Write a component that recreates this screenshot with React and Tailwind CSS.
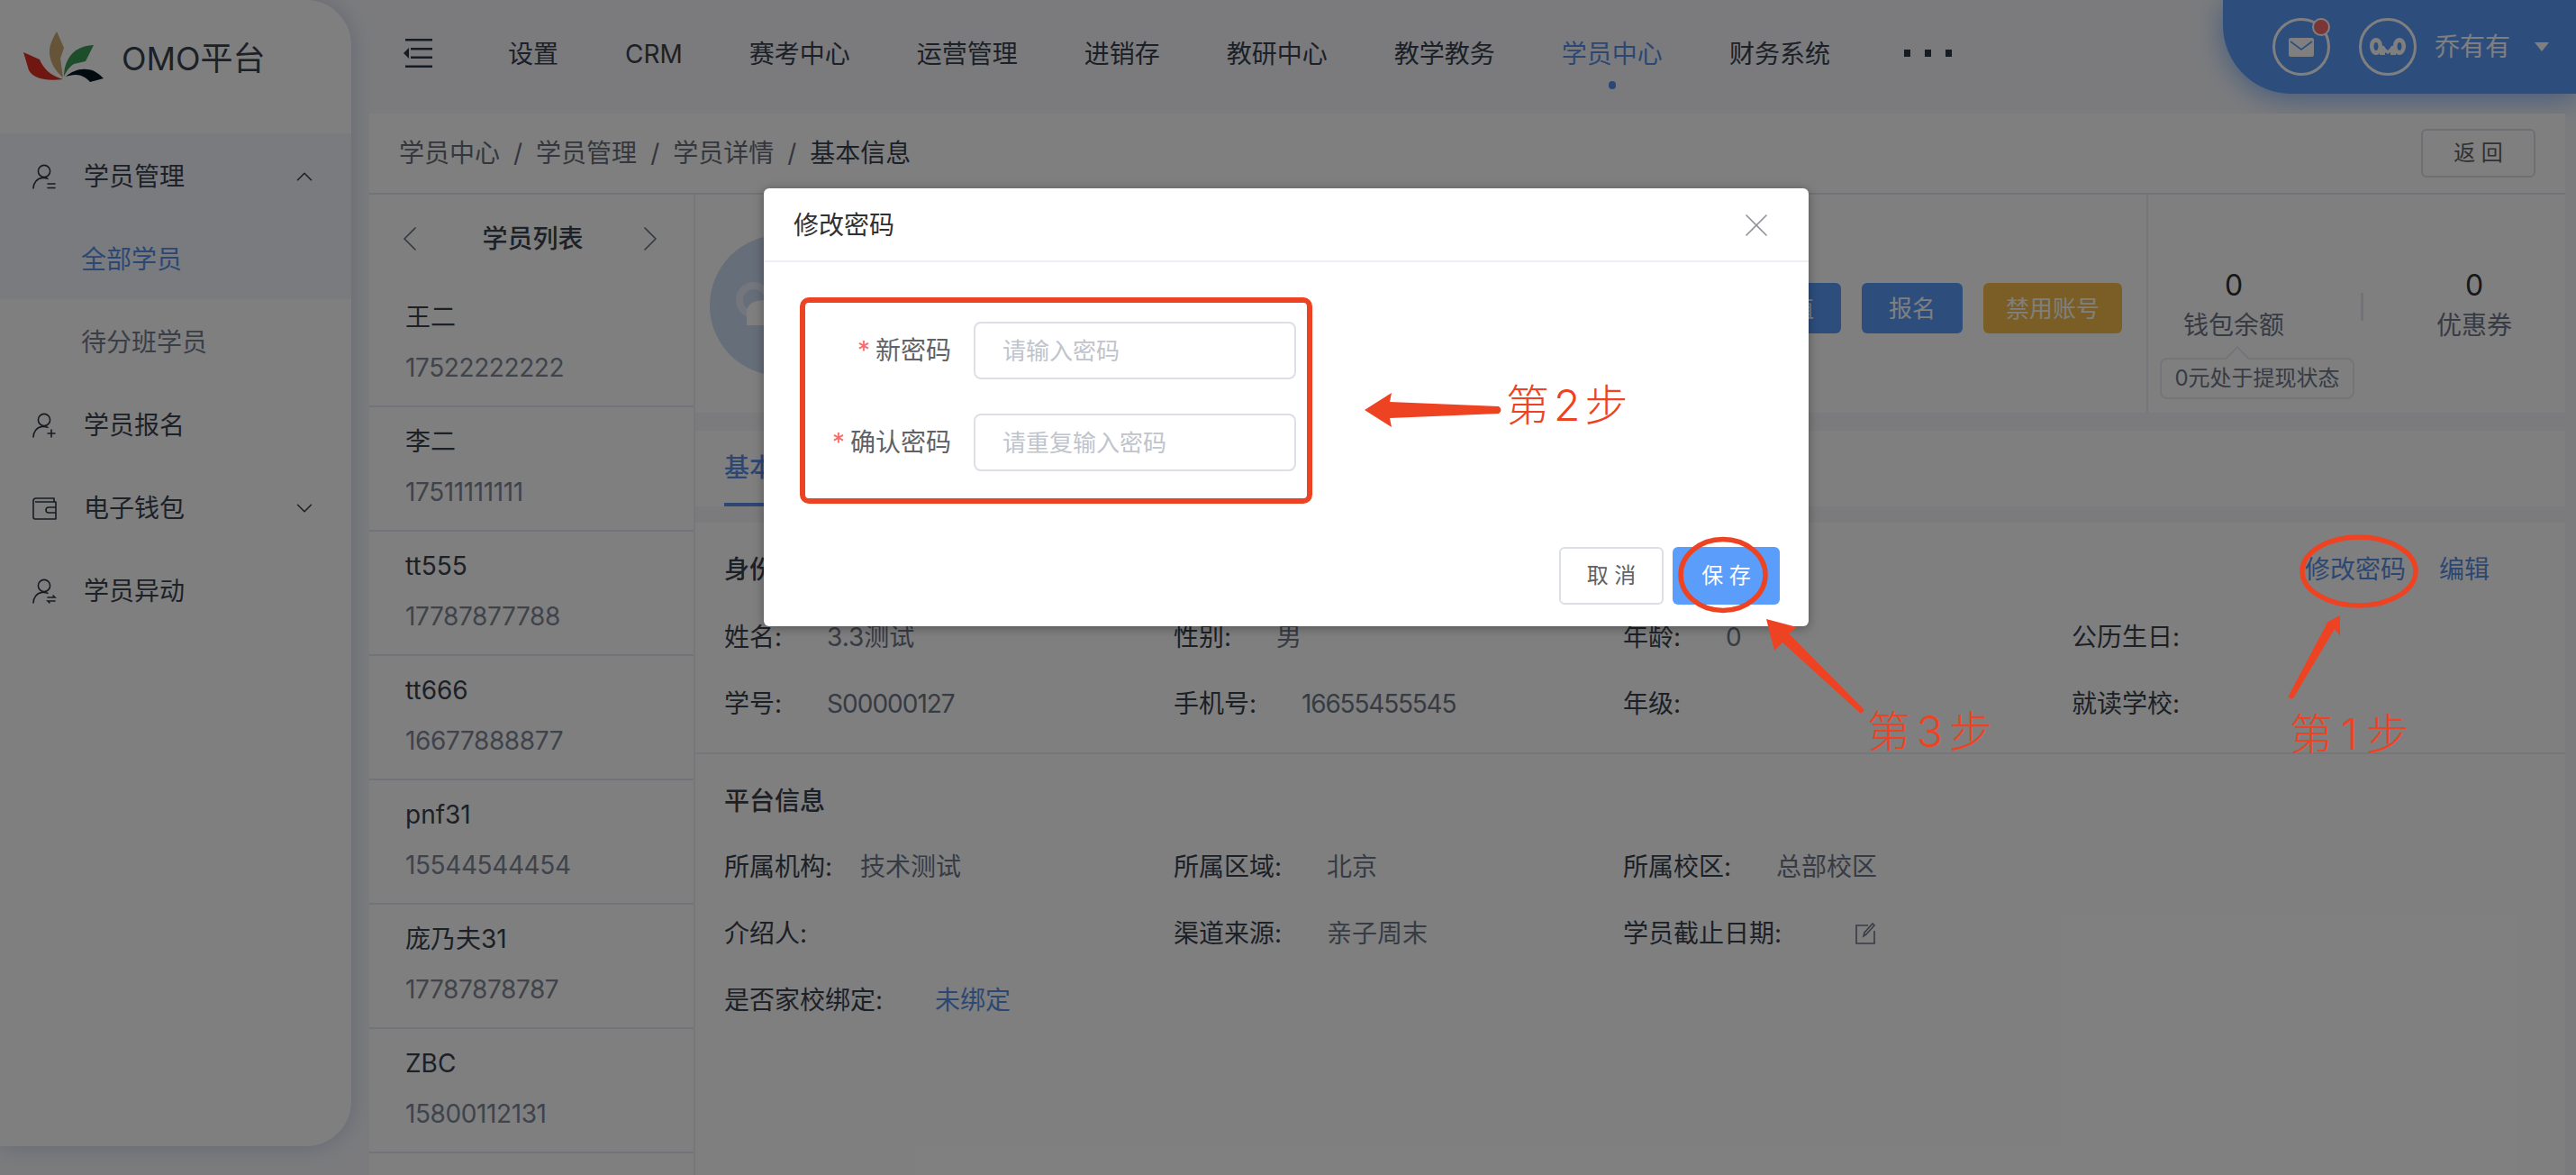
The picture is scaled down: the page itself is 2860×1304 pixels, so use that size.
import { ChevronDown, ChevronLeft, ChevronRight, ChevronUp, X } from 'lucide-react';

const navItems = ['设置', 'CRM', '赛考中心', '运营管理', '进销存', '教研中心', '教学教务', '学员中心', '财务系统'];

const students = [
    { name: '王二', phone: '17522222222' },
    { name: '李二', phone: '17511111111' },
    { name: 'tt555', phone: '17787877788' },
    { name: 'tt666', phone: '16677888877' },
    { name: 'pnf31', phone: '15544544454' },
    { name: '庞乃夫31', phone: '17787878787' },
    { name: 'ZBC', phone: '15800112131' },
];

// small person glyph used in the side menu, mark is the little sign at lower right
const PersonIcon = ({ mark }) => (
    <svg width="27" height="28" viewBox="0 0 27 28" fill="none" stroke="#2f3744" strokeWidth="1.6" strokeLinecap="round">
        <circle cx="13" cy="8" r="6.6" />
        <path d="M1 27c0-6 4-11 10-11.600 2-.2 4 0 6 1" />
        {mark === 'list' && <path d="M17 22h8M17 26.500h8" />}
        {mark === 'plus' && <path d="M17 23h8M21 19v8" />}
        {mark === 'swap' && <path d="M17 21h8l-2-2M25 25h-8l2 2" />}
    </svg>
);

const WalletIcon = () => (
    <svg width="27" height="26" viewBox="0 0 27 26" fill="none" stroke="#2f3744" strokeWidth="1.6" strokeLinejoin="round">
        <path d="M24 6V2H4C2 2 1 3 1 5v18c0 1 1 2 2 2h23V6H3" />
        <path d="M26 12h-8a3 3 0 0 0 0 6h8" />
    </svg>
);

const Logo = () => (
    <svg width="90" height="57" viewBox="26 35 90 57" className="shrink-0">
        <path fill="#de2e20" d="M26 58L44 66C48 76 56 84 70 88C52 90 38 88 32 78Z" />
        <path fill="#caa86e" d="M63 35L71 53L67 65L70 86C60 78 54 66 55 55C56 47 60 40 63 35Z" />
        <path fill="#3a9a54" d="M104 50L95 68L82 71C77 74 73 80 71 85C71 72 76 62 84 56C90 52 97 50 104 50Z" />
        <path fill="#04161e" d="M73 85C80 79 88 76 96 77C104 77 110 82 115 87L100 91C96 86 90 83 84 83C80 83 76 84 73 85Z" />
    </svg>
);

const MenuRow = ({ icon, label, chevron }) => (
    <div className="h-[92px] flex items-center pl-[36px] pr-[37px] pt-[3px] text-[28px] text-[#3b4350]">
        <div className="w-[57px]">{icon}</div>
        <span>{label}</span>
        {chevron === 'up' && <ChevronUp className="ml-auto text-[#3b4350]" size={30} strokeWidth={1.3} />}
        {chevron === 'down' && <ChevronDown className="ml-auto text-[#3b4350]" size={30} strokeWidth={1.3} />}
    </div>
);

const Sidebar = () => (
    <aside className="w-[390px] h-[1272px] shrink-0 bg-white rounded-r-[50px] shadow-[0_0_24px_rgba(120,130,190,0.35)]">
        <div className="h-[148px] flex items-start pt-[35px] pl-[26px] gap-[19px]">
            <Logo />
            <span className="text-[36px] leading-[50px] mt-[5px] text-[#39414e]">OMO平台</span>
        </div>
        <div className="bg-[#f3f6ff]">
            <MenuRow icon={<PersonIcon mark="list" />} label="学员管理" chevron="up" />
            <div className="h-[92px] flex items-center pl-[90px] pt-[3px] text-[28px] text-[#5b8fe6]">全部学员</div>
        </div>
        <div className="h-[92px] flex items-center pl-[90px] pt-[3px] text-[28px] text-[#747c8e]">待分班学员</div>
        <MenuRow icon={<PersonIcon mark="plus" />} label="学员报名" />
        <MenuRow icon={<WalletIcon />} label="电子钱包" chevron="down" />
        <MenuRow icon={<PersonIcon mark="swap" />} label="学员异动" />
    </aside>
);

const TopBar = () => (
    <header className="h-[126px] shrink-0 flex items-start">
        <div className="h-[118px] flex items-center pl-[38px] text-[28px] text-[#39414e]">
            <svg width="32" height="32" viewBox="0 0 32 32" className="mr-[84px]" fill="#2f3744">
                <rect x="2" y="0" width="30" height="2.500" />
                <rect x="2" y="29.500" width="30" height="2.500" />
                <rect x="8" y="10" width="24" height="2.500" />
                <rect x="8" y="19.500" width="24" height="2.500" />
                <path d="M6 10v12l-6-6z" />
            </svg>
            <div className="flex gap-[74px] pt-[2px]">
                {navItems.map((item) => (
                    <div key={item} className="relative">
                        <span className={item === '学员中心' ? 'text-[#5b8fe6]' : ''}>{item}</span>
                        {item === '学员中心' && (
                            <div className="absolute left-1/2 -ml-[4px] top-[51px] w-[8px] h-[9px] rounded-full bg-[#5b8fe6]" />
                        )}
                    </div>
                ))}
            </div>
            <div className="flex gap-[16px] ml-[82px]">
                <div className="w-[7px] h-[8px] bg-[#2f3744]" />
                <div className="w-[7px] h-[8px] bg-[#2f3744]" />
                <div className="w-[7px] h-[8px] bg-[#2f3744]" />
            </div>
        </div>
        <div className="ml-auto -mr-[12px] w-[392px] h-[104px] shrink-0 flex items-center pl-[55px] bg-[#5b9dfa] rounded-bl-[76px] shadow-[0_6px_30px_rgba(91,157,250,0.7)]">
            <div className="relative w-[64px] h-[64px] rounded-full border-[3px] border-white flex items-center justify-center">
                <svg width="28" height="21" viewBox="0 0 28 21">
                    <rect width="28" height="21" rx="2.500" fill="#fff" />
                    <path d="M2 4l12 9 12-9" fill="none" stroke="#5b9dfa" strokeWidth="1.600" />
                </svg>
                <div className="absolute -top-[3px] -right-[3px] w-[20px] h-[20px] rounded-full bg-[#f56c6c] border-[2px] border-white" />
            </div>
            <div className="ml-[32px] w-[64px] h-[64px] rounded-full border-[3px] border-white flex items-center justify-center">
                <svg width="40" height="20" viewBox="0 0 40 20" fill="#fff">
                    <path fillRule="evenodd" d="M7 0c4 0 7 4 7 9s-3 10-7 10-7-5-7-10 3-9 7-9zm0 5c-1.500 0-2.500 2-2.500 4.500S5.500 14 7 14s2.500-2 2.500-4.500S8.500 5 7 5z" />
                    <path fillRule="evenodd" d="M33 0c4 0 7 4 7 9s-3 10-7 10-7-5-7-10 3-9 7-9zm0 5c-1.500 0-2.500 2-2.500 4.500S31.500 14 33 14s2.500-2 2.500-4.500S34.500 5 33 5z" />
                    <path d="M11 19v-7c3-4 5-4 6-1l3 3 3-3c1-3 3-3 6 1v7h-6v-3l-3 2-3-2v3z" />
                </svg>
            </div>
            <span className="ml-[20px] text-[28px] text-white">乔有有</span>
            <div className="ml-[27px] w-0 h-0 border-x-[8px] border-x-transparent border-t-[10px] border-t-white" />
        </div>
    </header>
);

const StudentList = () => (
    <div className="w-[362px] shrink-0 border-r-2 border-[#eceef6] bg-white">
        <div className="h-[98px] flex items-center justify-between pl-[29px] pr-[32px] text-[#3b4350]">
            <ChevronLeft size={48} strokeWidth={0.85} className="-mx-[8px] text-[#6a7282]" />
            <span className="ml-[6px] text-[28px] font-medium">学员列表</span>
            <ChevronRight size={48} strokeWidth={0.85} className="-mx-[8px] text-[#6a7282]" />
        </div>
        {students.map((s) => (
            <div key={s.phone} className="h-[138px] border-b-2 border-[#e4e6f0] pl-[40px] pt-[18px]">
                <div className="text-[28px] leading-[40px] text-[#39414e]">{s.name}</div>
                <div className="text-[28px] leading-[40px] mt-[16px] tracking-[-0.4px] text-[#7f8799]">{s.phone}</div>
            </div>
        ))}
    </div>
);

const WalletPanel = () => (
    <div className="w-[465px] h-full shrink-0 border-l-2 border-[#eceef6] flex pt-[81px]">
        <div className="ml-[13px] w-[216px] shrink-0">
            <div className="w-[164px] text-center">
                <div className="text-[32px] leading-[40px] text-[#303133]">0</div>
                <div className="text-[28px] leading-[40px] mt-[4px] text-[#6f7788]">钱包余额</div>
            </div>
            <div className="relative mt-[16px] h-[46px] rounded-[8px] border-2 border-[#e8eaf2] flex items-center justify-center text-[24px] text-[#6f7788] whitespace-nowrap">
                <div className="absolute -top-[11px] left-[74px] w-[20px] h-[20px] rotate-45 border-t-2 border-l-2 border-[#e8eaf2] bg-white" />
                <span className="relative">0元处于提现状态</span>
            </div>
        </div>
        <div className="ml-[7px] mt-[28px] w-[3px] h-[31px] bg-[#e4e6f0]" />
        <div className="ml-[22px] w-[202px] text-center">
            <div className="text-[32px] leading-[40px] text-[#303133]">0</div>
            <div className="text-[28px] leading-[40px] mt-[4px] text-[#6f7788]">优惠券</div>
        </div>
    </div>
);

const Field = ({ label, value, gapClass, valueClass = 'text-[#6f7788]', children }) => (
    <div className="flex items-center text-[28px] text-[#39414e] whitespace-nowrap">
        <span>{label}:</span>
        {value && <span className={`${gapClass} ${valueClass}`}>{value}</span>}
        {children}
    </div>
);

const InfoRow = ({ children }) => (
    <div className="h-[74px] grid grid-cols-[499px_499px_498px_1fr] items-center">{children}</div>
);

const InfoPanel = () => (
    <div className="flex-1 bg-white pl-[32px] pr-[84px]">
        <div className="h-[90px] pt-[14px] flex items-center text-[28px]">
            <span className="font-medium text-[#39414e]">身份信息</span>
            <span className="ml-auto text-[#5b8fe6]">修改密码</span>
            <span className="ml-[37px] text-[#5b8fe6]">编辑</span>
        </div>
        <InfoRow>
            <Field label="姓名" value="3.3测试" gapClass="ml-[50px]" />
            <Field label="性别" value="男" gapClass="ml-[50px]" />
            <Field label="年龄" value="0" gapClass="ml-[50px]" />
            <Field label="公历生日" />
        </InfoRow>
        <InfoRow>
            <Field label="学号" value="S00000127" gapClass="ml-[50px]" valueClass="text-[#6f7788] tracking-[-1px]" />
            <Field label="手机号" value="16655455545" gapClass="ml-[50px]" valueClass="text-[#6f7788] tracking-[-1.2px]" />
            <Field label="年级" />
            <Field label="就读学校" />
        </InfoRow>
        <div className="mt-[17px] -ml-[32px] -mr-[84px] border-t-2 border-[#eceef6]" />
        <div className="h-[88px] pt-[16px] flex items-center text-[28px] font-medium text-[#39414e]">平台信息</div>
        <InfoRow>
            <Field label="所属机构" value="技术测试" gapClass="ml-[31px]" />
            <Field label="所属区域" value="北京" gapClass="ml-[50px]" />
            <Field label="所属校区" value="总部校区" gapClass="ml-[50px]" />
        </InfoRow>
        <InfoRow>
            <Field label="介绍人" />
            <Field label="渠道来源" value="亲子周末" gapClass="ml-[50px]" />
            <Field label="学员截止日期">
                <svg width="22" height="24" viewBox="0 0 22 24" className="ml-[82px]" fill="none" stroke="#6f7788" strokeWidth="1.600">
                    <path d="M14 3H1v20h20V9" />
                    <path d="M9 15l1-4L19 1l2 2-9 10z" />
                </svg>
            </Field>
        </InfoRow>
        <InfoRow>
            <Field label="是否家校绑定" value="未绑定" gapClass="ml-[58px]" valueClass="text-[#5b8fe6]" />
        </InfoRow>
    </div>
);

const PasswordInput = ({ label, placeholder }) => (
    <div className="flex items-center h-[64px]">
        <label className="w-[187px] shrink-0 pr-[25px] text-right text-[28px] text-[#606266] whitespace-nowrap">
            <span className="text-[#f56c6c] mr-[6px]">*</span>
            {label}
        </label>
        <input
            type="text"
            placeholder={placeholder}
            className="w-[358px] h-[64px] px-[30px] border-2 border-[#dcdfe6] rounded-[8px] text-[26px] bg-white placeholder:text-[#c0c4cc] outline-none"
        />
    </div>
);

const PasswordDialog = () => (
    <div className="absolute left-[848px] top-[209px] w-[1160px] h-[486px] bg-white rounded-[6px] shadow-[0_2px_12px_rgba(0,0,0,0.35)] flex flex-col">
        <div className="h-[82px] shrink-0 border-b-2 border-[#eeeef4] flex items-center justify-between pt-[2px] pl-[33px] pr-[42px]">
            <span className="text-[28px] text-[#303133]">修改密码</span>
            <X size={44} strokeWidth={0.9} className="-m-[6px] text-[#909399]" />
        </div>
        <div className="ml-[40px] mt-[39px] w-[569px] h-[229px] shrink-0 border-[6px] border-[#ee4323] rounded-[10px] pt-[21px]">
            <div className="flex flex-col gap-[38px]">
                <PasswordInput label="新密码" placeholder="请输入密码" />
                <PasswordInput label="确认密码" placeholder="请重复输入密码" />
            </div>
        </div>
        <div className="flex justify-end gap-[10px] mt-[48px] pr-[32px]">
            <button className="w-[116px] h-[64px] border-2 border-[#dcdfe6] rounded-[6px] bg-white text-[24px] text-[#606266]">取 消</button>
            <button className="w-[119px] h-[64px] rounded-[6px] bg-[#5b9dfa] text-[24px] text-white">保 存</button>
        </div>
    </div>
);

// red marks drawn on top of the screenshot, coordinates are the free canvas of the page
const Annotations = () => (
    <>
        <svg className="absolute inset-0 pointer-events-none" width="2860" height="1304" viewBox="0 0 2860 1304">
            <path fill="#ee4323" d="M1515 455L1545 436L1543 446L1664 451Q1669 455 1664 459L1543 464L1545 474Z" />
            <ellipse cx="1913" cy="638" rx="47" ry="39.500" fill="none" stroke="#ee4323" strokeWidth="5.500" />
            <path fill="#ee4323" d="M1961 687L1995 696L1986 703L2070 788L2066 792L1979 713L1970 722Z" />
            <ellipse cx="2619" cy="634" rx="63" ry="38" fill="none" stroke="#ee4323" strokeWidth="5.500" />
            <path fill="#ee4323" d="M2598 683L2598 706L2592 698L2546 775Q2541 776 2541 772L2584 691L2577 694Z" />
        </svg>
        <span className="absolute left-[1672px] top-[420px] text-[48px] leading-[60px] tracking-[5px] font-light text-[#ee4323] whitespace-nowrap">第2步</span>
        <span className="absolute left-[2073px] top-[782px] text-[48px] leading-[60px] tracking-[7px] font-light text-[#ee4323] whitespace-nowrap">第3步</span>
        <span className="absolute left-[2542px] top-[785px] text-[48px] leading-[60px] tracking-[9px] font-light text-[#ee4323] whitespace-nowrap">第1步</span>
    </>
);

export default function App() {
    return (
        <div className="relative w-[2860px] h-[1304px] overflow-hidden bg-[#f6f7fb] font-['Inter','Noto_Sans_CJK_SC',sans-serif]">
            <div className="flex h-full items-start">
                <Sidebar />
                <main className="flex-1 h-full ml-[20px] mr-[12px] flex flex-col min-w-0">
                    <TopBar />
                    <div className="h-[90px] shrink-0 bg-white border-b-2 border-[#e4e6f0] flex items-center pl-[33px] pr-[33px] text-[28px] text-[#6a6e7c]">
                        <span>学员中心</span>
                        <span className="mx-[15px]">/</span>
                        <span>学员管理</span>
                        <span className="mx-[15px]">/</span>
                        <span>学员详情</span>
                        <span className="mx-[15px]">/</span>
                        <span className="text-[#39414e]">基本信息</span>
                        <button className="ml-auto w-[127px] h-[54px] border-2 border-[#dcdfe6] rounded-[6px] text-[24px] text-[#606266]">返 回</button>
                    </div>
                    <div className="flex flex-1 min-h-0">
                        <StudentList />
                        <div className="flex-1 flex flex-col bg-[#f6f7fb]">
                            <div className="h-[242px] shrink-0 bg-white flex">
                                <div className="ml-[16px] mt-[45px] w-[156px] h-[156px] shrink-0 rounded-full bg-[#cddcf3]">
                                    <svg width="156" height="156" viewBox="0 0 156 156">
                                        <circle cx="49" cy="72" r="16" fill="none" stroke="#e6edf8" strokeWidth="8" />
                                        <path d="M41 100V86Q41 72 62 72V100Z" fill="#fff" />
                                    </svg>
                                </div>
                                <div className="ml-auto pt-[98px] pr-[27px] flex gap-[23px] text-[26px] text-white">
                                    <div className="w-[112px] h-[56px] rounded-[6px] bg-[#5b9dfa] flex items-center justify-center">充值</div>
                                    <div className="w-[112px] h-[56px] rounded-[6px] bg-[#5b9dfa] flex items-center justify-center">报名</div>
                                    <div className="w-[154px] h-[56px] rounded-[6px] bg-[#f4bd4a] flex items-center justify-center">禁用账号</div>
                                </div>
                                <WalletPanel />
                            </div>
                            <div className="h-[84px] shrink-0 mt-[20px] mb-[18px] bg-white pl-[32px] flex">
                                <div className="h-full flex items-center pt-[2px] border-b-4 border-[#5b8fe6] text-[28px] text-[#5b8fe6] font-medium">基本信息</div>
                            </div>
                            <InfoPanel />
                        </div>
                    </div>
                </main>
            </div>
            <div className="absolute inset-0 bg-black/50" />
            <PasswordDialog />
            <Annotations />
        </div>
    );
}
